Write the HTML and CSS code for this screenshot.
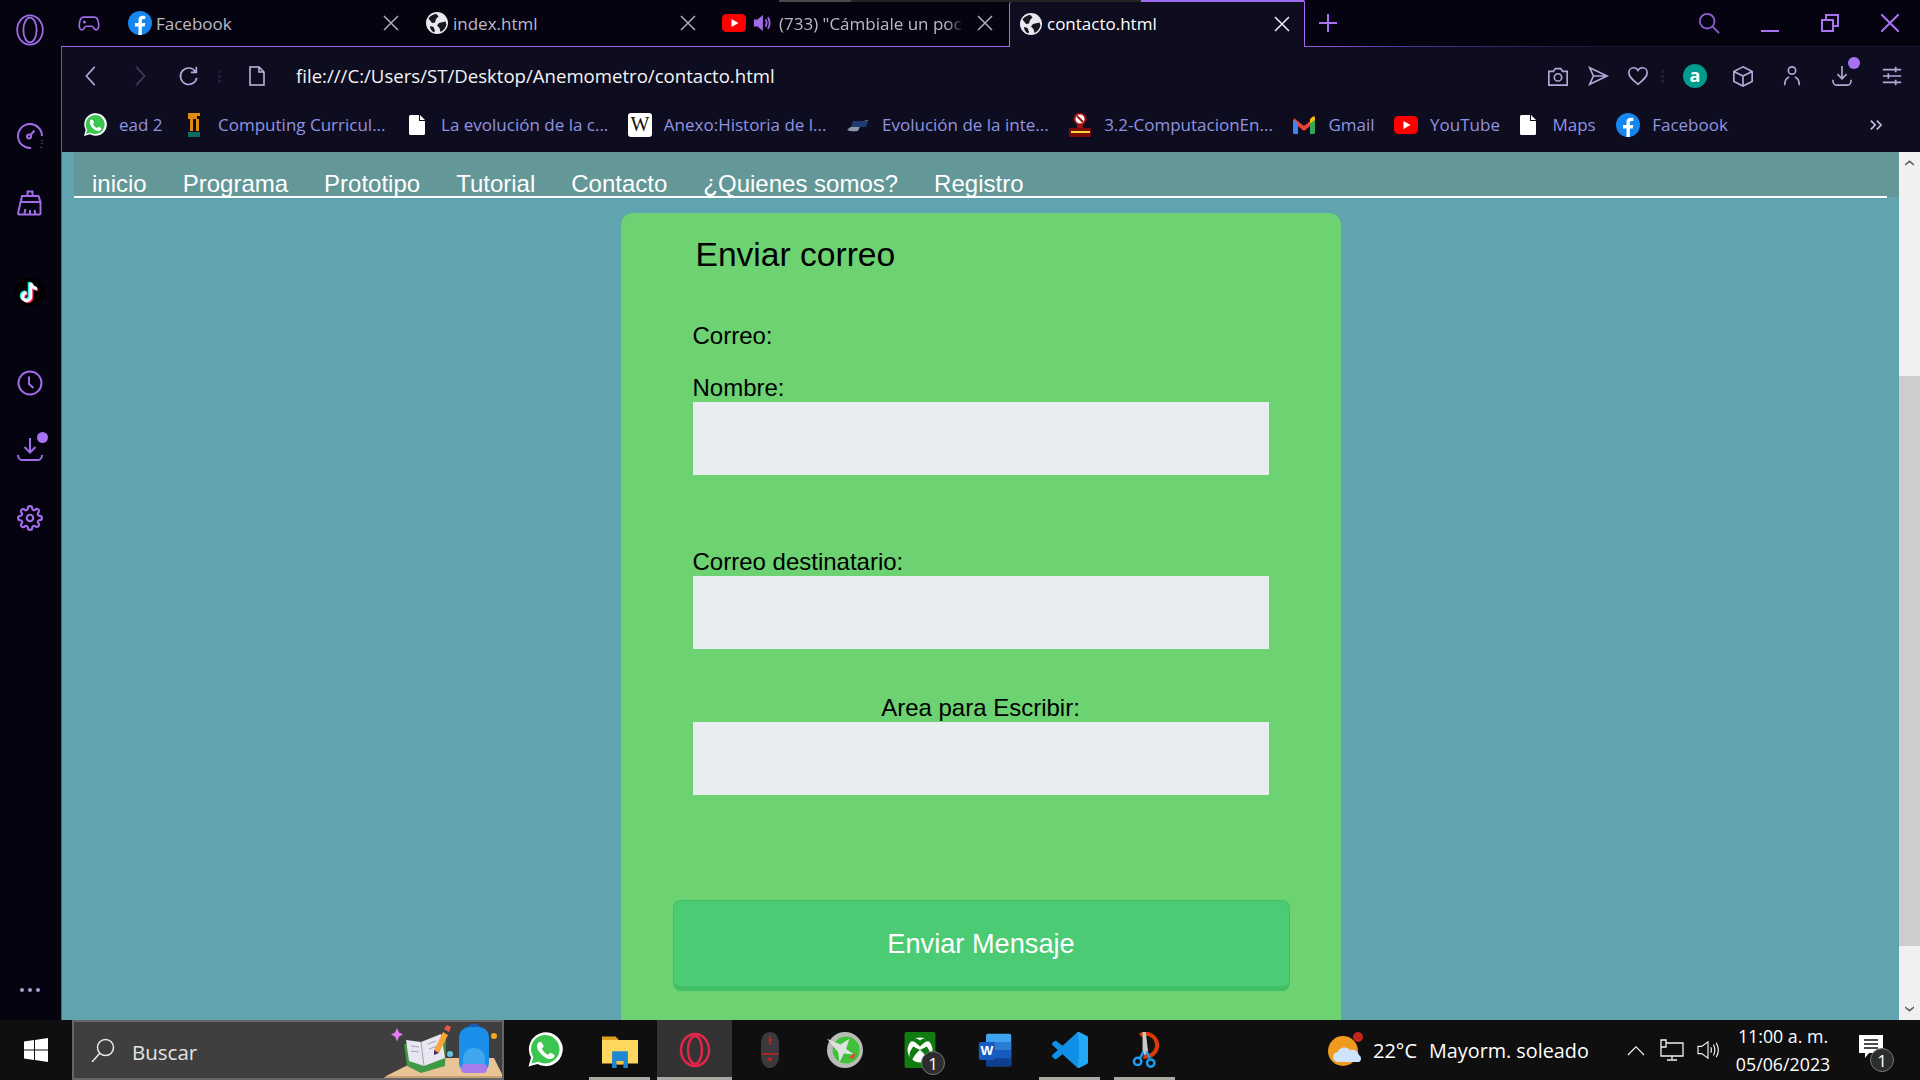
FILE: index.html
```html
<!DOCTYPE html>
<html lang="es">
  <head>
    <meta charset="UTF-8" />
    <meta name="viewport" content="width=device-width, initial-scale=1.0" />
    <title>contacto.html</title>
    <link rel="stylesheet" href="styles.css">
  </head>
  <body>
    <!-- iconos repetidos -->
    <svg class="defs" width="0" height="0">
      <symbol id="i-fb" viewBox="0 0 24 24">
        <circle cx="12" cy="12" r="12" fill="#1686f0" />
        <path fill="#fff" d="M16.7 15.5l.5-3.5h-3.4V9.8c0-1 .5-1.9 2-1.9h1.5V5c-2.2-.4-6.8-1-6.8 4.3V12H7v3.5h3.5V24h3.3v-8.5z" />
      </symbol>
      <symbol id="i-globe" viewBox="0 0 24 24">
        <circle cx="12" cy="12" r="11" fill="#e8e8ee" />
        <path fill="#17151f" d="M3.5 7.5c2-3 5-4.5 8-4.5l2 2.5-2.500 2.500-1 3.500-3 .5zM14 12l6.500-1.500 1 3c-1 3.500-3 6-6 7.500l-1-4-2.500-2.500zM5 15l3.500 1 1.500 4-1 1.500C6.500 20 5 18 5 15z" />
      </symbol>
      <symbol id="i-doc" viewBox="0 0 16 20">
        <path fill="#fff" d="M0 1.500A1.500 1.500 0 0 1 1.500 0H10l6 6v12.500a1.500 1.500 0 0 1-1.500 1.500h-13A1.500 1.500 0 0 1 0 18.500z" />
        <path fill="#0e0c1f" d="M10 0l1 0 5 5 0 1-6 0z" />
        <path fill="#fff" d="M11 0l5 5h-5z" />
      </symbol>
      <symbol id="i-yt" viewBox="0 0 24 18">
        <rect width="24" height="18" rx="4.500" fill="#f00" />
        <path fill="#fff" d="M9.500 5l7 4-7 4z" />
      </symbol>
      <symbol id="i-wa" viewBox="0 0 24 24">
        <path fill="#fff" d="M1 23l1.700-6A11.300 11.300 0 1 1 7 21.300z" />
        <path fill="#3dc552" d="M3 21l1.200-4.300A9.500 9.500 0 1 1 7.500 19.800z" />
        <path fill="#fff" d="M8.700 6.500c-.6 0-2 1-2 3 0 3.500 5 8.500 8.700 8.500 2 0 3-1.500 3-2.400 0-.5-2.400-1.800-2.900-1.800-.4 0-1 1.300-1.500 1.300-1 0-4-3-4-4 0-.5 1.100-1 1.100-1.500 0-.5-1.300-3.100-2.400-3.100z" />
      </symbol>
    </svg>

    <div class="screen">
      <div class="browser">
        <aside class="sidebar">
          <svg class="side-logo" viewBox="0 0 34 38" fill="none" stroke="#a06ce8" stroke-width="2">
            <ellipse cx="17" cy="19" rx="14.500" ry="16.500" />
            <ellipse cx="17" cy="19" rx="7.500" ry="14" />
          </svg>
          <svg class="side-icon side-speed" viewBox="0 0 26 26">
            <path d="M14 25A12 12 0 1 1 25 13" />
            <circle cx="12" cy="13.500" r="2" />
            <path d="M13.500 12l4-4.500M25 17v.5M25 20.500v.5M24 24v.5" />
          </svg>
          <svg class="side-icon side-broom" viewBox="0 0 26 26">
            <path d="M10.500 6V1.500h5V6M5 6h16.500l2 6v11.500a1 1 0 0 1-1 1H2a1 1 0 0 1-1-1zM4 12h19M7 25l1.500-6M13 25v-5M18.500 25l-1-5" />
          </svg>
          <div class="side-tiktok">
            <svg viewBox="0 0 24 24" fill="none" stroke-width="2.600">
              <path stroke="#25f4ee" d="M11.500 4v11a3.200 3.200 0 1 1-3.200-3.200M11.500 4c.5 2.500 2.500 4.500 5 4.600" />
              <path stroke="#fe2c55" d="M13.500 5.500v11a3.200 3.200 0 1 1-3.200-3.200M13.500 5.500c.5 2.500 2.500 4.500 5 4.600" />
              <path stroke="#fff" d="M12.500 4.700v11a3.200 3.200 0 1 1-3.200-3.200M12.500 4.700c.5 2.500 2.500 4.500 5 4.600" />
            </svg>
          </div>
          <svg class="side-icon side-clock" viewBox="0 0 26 26">
            <circle cx="13" cy="13" r="11.500" />
            <path d="M12 6.500v7.500l4.500 4" />
          </svg>
          <div class="side-download">
            <svg class="side-icon" viewBox="0 0 26 26">
              <path d="M13 1v14M7.500 10l5.500 5.500 5.500-5.500M1 18c0 3 2 5 4 5h16c2 0 4-2 4-5" />
            </svg>
            <span class="dot"></span>
          </div>
          <svg class="side-icon side-gear" viewBox="0 0 24 24">
            <circle cx="12" cy="12" r="3" />
            <path d="M19.400 15a1.650 1.650 0 0 0 .33 1.820l.06.06a2 2 0 0 1 0 2.830 2 2 0 0 1-2.830 0l-.06-.06a1.650 1.650 0 0 0-1.820-.33 1.650 1.650 0 0 0-1 1.510V21a2 2 0 0 1-2 2 2 2 0 0 1-2-2v-.09A1.650 1.650 0 0 0 9 19.400a1.650 1.650 0 0 0-1.820.33l-.06.06a2 2 0 0 1-2.830 0 2 2 0 0 1 0-2.830l.06-.06a1.650 1.650 0 0 0 .33-1.820 1.650 1.650 0 0 0-1.510-1H3a2 2 0 0 1-2-2 2 2 0 0 1 2-2h.09A1.650 1.650 0 0 0 4.600 9a1.650 1.650 0 0 0-.33-1.820l-.06-.06a2 2 0 0 1 0-2.830 2 2 0 0 1 2.830 0l.06.06a1.650 1.650 0 0 0 1.820.33H9a1.650 1.650 0 0 0 1-1.510V3a2 2 0 0 1 2-2 2 2 0 0 1 2 2v.09a1.650 1.650 0 0 0 1 1.510 1.650 1.650 0 0 0 1.820-.33l.06-.06a2 2 0 0 1 2.830 0 2 2 0 0 1 0 2.830l-.06.06a1.650 1.650 0 0 0-.33 1.820V9a1.650 1.650 0 0 0 1.510 1H21a2 2 0 0 1 2 2 2 2 0 0 1-2 2h-.09a1.650 1.650 0 0 0-1.510 1z" />
          </svg>
          <div class="side-more"><span></span><span></span><span></span></div>
        </aside>

        <div class="window">
          <div class="tabbar">
            <div class="tab-games">
              <svg viewBox="0 0 24 18" fill="none" stroke="#a06ce8" stroke-width="1.800">
                <path d="M6 2h12c2.500 0 4 3 4.500 7 .5 4-.5 7-2.500 7-2.500 0-3-4-5-4H9c-2 0-2.500 4-5 4-2 0-3-3-2.500-7C2 5 3.500 2 6 2z" />
                <path d="M7 6v3M5.500 7.500h3M16 7h.1M18 8.500h.1" />
              </svg>
            </div>
            <div class="tab">
              <svg class="tab-icon"><use href="#i-fb" /></svg>
              <span class="tab-title">Facebook</span>
              <svg class="tab-close" viewBox="0 0 16 16"><path d="M1 1l14 14M15 1L1 15" /></svg>
            </div>
            <div class="tab">
              <svg class="tab-icon"><use href="#i-globe" /></svg>
              <span class="tab-title">index.html</span>
              <svg class="tab-close" viewBox="0 0 16 16"><path d="M1 1l14 14M15 1L1 15" /></svg>
            </div>
            <div class="tab">
              <svg class="tab-icon tab-yt"><use href="#i-yt" /></svg>
              <svg class="tab-sound" viewBox="0 0 20 20">
                <path fill="#a06ce8" d="M1 6h4l6-5v18l-6-5H1z" />
                <path fill="none" stroke="#a06ce8" stroke-width="2" d="M14 6c1.500 2.500 1.500 5.500 0 8M16.500 3.500c2.500 4 2.500 9 0 13" />
              </svg>
              <span class="tab-title tab-fade">(733) "Cámbiale un poc</span>
              <svg class="tab-close" viewBox="0 0 16 16"><path d="M1 1l14 14M15 1L1 15" /></svg>
            </div>
            <div class="tab tab-active">
              <svg class="tab-icon"><use href="#i-globe" /></svg>
              <span class="tab-title">contacto.html</span>
              <svg class="tab-close" viewBox="0 0 16 16"><path d="M1 1l14 14M15 1L1 15" /></svg>
            </div>
            <svg class="tab-new" viewBox="0 0 18 18"><path d="M9 0v18M0 9h18" /></svg>
            <div class="tab-load"><span class="load-a"></span><span class="load-b"></span><span class="load-c"></span></div>
            <div class="win-controls">
              <svg class="win-search" viewBox="0 0 24 24"><circle cx="10" cy="10" r="8" /><path d="M16 16l7 7" /></svg>
              <svg class="win-btn" viewBox="0 0 18 18"><path d="M0 17h18" /></svg>
              <svg class="win-btn" viewBox="0 0 18 18"><path d="M1 6h11v11H1zM5 6V1h12v11h-5" /></svg>
              <svg class="win-btn" viewBox="0 0 18 18"><path d="M0 0l18 18M18 0L0 18" /></svg>
            </div>
          </div>

          <div class="body">
            <div class="toolbar">
              <div class="tool-left">
                <svg class="tool" viewBox="0 0 24 24"><path d="M16 2L7 12l9 10" /></svg>
                <svg class="tool tool-off" viewBox="0 0 24 24"><path d="M8 2l9 10-9 10" /></svg>
                <svg class="tool" viewBox="0 0 24 24"><path d="M19 7a9 9 0 1 0 1.500 7M20 2v6h-6" /></svg>
              </div>
              <div class="tool-sep"><span></span><span></span><span></span></div>
              <svg class="tool-doc" viewBox="0 0 16 20"><path d="M1 1h9l5 5v13H1zM10 1v5h5" /></svg>
              <span class="url">file:///C:/Users/ST/Desktop/Anemometro/contacto.html</span>
              <div class="tool-right">
                <svg class="tool" viewBox="0 0 24 24"><path d="M2 7h5l2-3h6l2 3h5v15H2z" /><circle cx="12" cy="13.500" r="4" /></svg>
                <svg class="tool" viewBox="0 0 24 24"><path d="M3 3l19 9-19 9 4-9zM7 12h15" /></svg>
                <svg class="tool" viewBox="0 0 24 24"><path d="M12 21C6 16 2 13 2 8.500 2 5 4.500 3 7 3c2 0 4 1 5 3 1-2 3-3 5-3 2.500 0 5 2 5 5.500C22 13 18 16 12 21z" /></svg>
                <div class="tool-sep tool-sep-right"><span></span><span></span><span></span></div>
                <div class="aria-slot">
                  <svg viewBox="0 0 24 24"><circle cx="12" cy="12" r="12" fill="#009d8e" /><text x="12" y="17.500" text-anchor="middle" class="aria-letter">a</text></svg>
                </div>
                <svg class="tool tool-cube" viewBox="0 0 24 24"><path d="M12 2l10 5v11l-10 5-10-5V7zM2 7l10 5 10-5M12 12v11" /></svg>
                <svg class="tool tool-person" viewBox="0 0 24 24"><circle cx="12" cy="6" r="4" /><path d="M4 22c0-5 2-8 5-9M20 22c0-5-2-8-5-9" /></svg>
                <div class="tool-download">
                  <svg class="tool" viewBox="0 0 24 24"><path d="M12 1v14M7 10l5 5 5-5M2 16c0 3 1.500 6 4 6h12c2.500 0 4-3 4-6" /></svg>
                  <span class="dot"></span>
                </div>
                <svg class="tool" viewBox="0 0 24 24"><path d="M2 5h20M2 12h20M2 19h20M16 2v6M8 9v6M16 16v6" /></svg>
              </div>
            </div>

            <div class="bookmarks">
              <div class="bm"><svg class="bm-icon"><use href="#i-wa" /></svg><span>ead 2</span></div>
              <div class="bm bm-curr">
                <svg class="bm-icon" viewBox="0 0 24 24">
                  <path fill="#e18a12" d="M6 0h12v3h-3v3H6zM8 6h3v12H8zM14 6h3v12h-3z" />
                  <path fill="#0d6a5f" d="M6 19h12v5H6z" />
                </svg>
                <span>Computing Curricul...</span>
              </div>
              <div class="bm bm-doc bm-first-doc"><svg class="bm-doc-icon"><use href="#i-doc" /></svg><span>La evolución de la c...</span></div>
              <div class="bm">
                <svg class="bm-icon" viewBox="0 0 24 24"><rect width="24" height="24" rx="3" fill="#fff" /><text x="12" y="18" text-anchor="middle" class="wiki-letter">W</text></svg>
                <span>Anexo:Historia de l...</span>
              </div>
              <div class="bm">
                <svg class="bm-icon" viewBox="0 0 24 24">
                  <path fill="#8b99ab" d="M1 17c5-5 13-9 22-10-7 3-9 6-11 11-3 0-7 1-11-1z" />
                  <path fill="#1f3c70" d="M7 8h15l-2 6H5z" />
                </svg>
                <span>Evolución de la inte...</span>
              </div>
              <div class="bm">
                <svg class="bm-icon" viewBox="0 0 24 24">
                  <circle cx="12" cy="6" r="5.500" fill="#fff" stroke="#a01111" stroke-width="2" />
                  <path stroke="#a01111" stroke-width="2" d="M9 3l6 6" />
                  <rect x="9" y="11" width="6" height="4" fill="#a01111" />
                  <rect x="1" y="15" width="22" height="9" rx="1" fill="#7c0b0b" />
                  <rect x="3" y="18" width="19" height="2" fill="#ffd83a" />
                </svg>
                <span>3.2-ComputacionEn...</span>
              </div>
              <div class="bm">
                <svg class="bm-icon" viewBox="0 0 24 24">
                  <path fill="#ea4335" d="M2 5l10 8 10-8v5l-10 8-10-8z" />
                  <path fill="#4285f4" d="M1 6.500l5 3.500v11H2.500A1.500 1.500 0 0 1 1 19.500z" />
                  <path fill="#34a853" d="M23 6.500l-5 3.500v11h3.500a1.500 1.500 0 0 0 1.500-1.500z" />
                  <path fill="#fbbc04" d="M18 6l3-2.500c1-.5 2 .2 2 1.500v2l-5 3.500z" />
                </svg>
                <span>Gmail</span>
              </div>
              <div class="bm"><svg class="bm-icon bm-yt"><use href="#i-yt" /></svg><span>YouTube</span></div>
              <div class="bm bm-doc bm-maps"><svg class="bm-doc-icon"><use href="#i-doc" /></svg><span>Maps</span></div>
              <div class="bm"><svg class="bm-icon"><use href="#i-fb" /></svg><span>Facebook</span></div>
              <svg class="bm-more" viewBox="0 0 14 12"><path d="M1 1l5 5-5 5M8 1l5 5-5 5" /></svg>
            </div>

            <div class="viewport">
              <main class="page">
                <header class="site-header">
                  <ul class="site-menu">
                    <li><a href="#">inicio</a></li>
                    <li><a href="#">Programa</a></li>
                    <li><a href="#">Prototipo</a></li>
                    <li><a href="#">Tutorial</a></li>
                    <li><a href="#">Contacto</a></li>
                    <li><a href="#">¿Quienes somos?</a></li>
                    <li><a href="#">Registro</a></li>
                  </ul>
                </header>
                <form class="mail-card">
                  <h2>Enviar correo</h2>
                  <p class="mail-from">Correo:</p>
                  <label class="field">Nombre:<input type="text" /></label>
                  <label class="field field-dest">Correo destinatario:<input type="text" /></label>
                  <label class="field field-area">Area para Escribir:<input type="text" /></label>
                  <button type="button" class="send-button">Enviar Mensaje</button>
                </form>
              </main>
              <div class="scrollbar">
                <svg class="scroll-arrow" viewBox="0 0 10 6"><path d="M0 6V4l5-4 5 4v2L5 2.500z" /></svg>
                <div class="scroll-track"><div class="scroll-thumb"></div></div>
                <svg class="scroll-arrow" viewBox="0 0 10 6"><path d="M0 0v2l5 4 5-4V0L5 3.500z" /></svg>
              </div>
            </div>
          </div>
        </div>
      </div>

      <footer class="taskbar">
        <div class="start">
          <svg viewBox="0 0 24 24"><path fill="#fff" d="M0 3.500l10-1.400V11.400H0zM11 2L24 0v11.400H11zM0 12.600h10v9.300L0 20.500zM11 12.600h13V24l-13-2z" /></svg>
        </div>
        <div class="search-box">
          <svg class="search-glass" viewBox="0 0 24 24"><circle cx="14.500" cy="9.500" r="8" /><path d="M9 15L1 24" /></svg>
          <span>Buscar</span>
          <svg class="search-art" viewBox="0 0 118 56">
            <path fill="#c8a075" d="M0 56l2-2h116v2z" />
            <path fill="#e8c496" d="M2 54l36-18h72l8 16v2z" />
            <path fill="#e57bf0" d="M13 6l2 4.500 4 2-4 2-2 5-2-5-4-2 4-2z" />
            <path fill="#3f9a45" d="M20 22l24 2 18-6-1 26-24 7-14-7z" />
            <path fill="#e8e6f0" d="M22 18l15 2 20-8 4 24-21 8-15-5z" />
            <path fill="none" stroke="#a99fb8" stroke-width="1" d="M37 20l3 24M27 24l8 1M27 29l8 1M44 22l8-3M45 27l8-3" />
            <path fill="#f7a63b" d="M50 28l9-18 5 3-9 18z" />
            <path fill="#e65a4a" d="M60 7l3-4 4 2-2 5z" />
            <path fill="#4a2c60" d="M50 28l5 3-5 2z" />
            <circle cx="66" cy="32" r="3" fill="#69c4df" />
            <circle cx="110" cy="14" r="3" fill="#f5a623" />
            <path fill="none" stroke="#1a5ec2" stroke-width="3" d="M84 9c0-8 12-8 12 0" />
            <rect x="75" y="5" width="30" height="46" rx="10" fill="#1a8ee8" />
            <rect x="79" y="26" width="22" height="24" rx="10" fill="#3fa6f0" />
            <rect x="77" y="42" width="26" height="9" rx="4" fill="#a67cea" />
          </svg>
        </div>
        <div class="task-apps">
          <div class="task-app"><svg class="app-icon app-wa"><use href="#i-wa" /></svg></div>
          <div class="task-app task-open">
            <svg class="app-icon" viewBox="0 0 32 32">
              <path fill="#e0a21e" d="M0 4h12l3 3H0z" />
              <path fill="#ffd65e" d="M0 7h32v21H0z" />
              <path fill="#1f87d0" d="M9 17h14v15h-4v-6h-6v6H9z" />
              <path fill="#ffc83d" d="M13 26h6v3h-6z" />
            </svg>
          </div>
          <div class="task-app task-active">
            <svg class="app-icon" viewBox="0 0 32 36" fill="none" stroke="#e0264a" stroke-width="2.500">
              <ellipse cx="16" cy="18" rx="14" ry="16" />
              <ellipse cx="16" cy="18" rx="7" ry="14" />
            </svg>
          </div>
          <div class="task-app">
            <svg class="app-mouse" viewBox="0 0 20 36">
              <path fill="#3a3a3e" d="M10 0c6 0 9 5 9 12v12c0 7-4 12-9 12S1 31 1 24V12C1 5 4 0 10 0z" />
              <path stroke="#c92020" stroke-width="1.500" d="M2 22h16M8 8h4M10 4v9" />
              <path fill="#c92020" d="M7 26h6l-3 4z" />
            </svg>
          </div>
          <div class="task-app">
            <svg class="app-icon" viewBox="0 0 32 32">
              <circle cx="16" cy="16" r="16" fill="#b7bcb5" />
              <circle cx="17" cy="16" r="12" fill="#3fc23a" />
              <path fill="#dfe3df" d="M0 6l12 5 8-5-3 9 7 5-9-1-4 8-1-9z" />
              <path fill="#e7492e" d="M19 23l6-5-1 6z" />
            </svg>
          </div>
          <div class="task-app">
            <svg class="app-icon app-xbox" viewBox="0 0 36 42">
              <rect width="36" height="42" rx="2" fill="#107c10" />
              <circle cx="18" cy="21" r="14.500" fill="#fff" />
              <path fill="#107c10" d="M18 17c-5-5-8-7-11-6l-1-1C9 6 14 7 18 10c4-3 9-4 12 0l-1 1c-3-1-6 1-11 6zM18 21c-5 4-9 10-9 12l-2-1c-3-6 0-10 3-15zM18 21c5 4 9 10 9 12l2-1c3-6 0-10-3-15z" />
            </svg>
            <span class="task-badge">1</span>
          </div>
          <div class="task-app">
            <svg class="app-icon" viewBox="0 0 36 40">
              <rect x="8" y="2" width="28" height="36" rx="2" fill="#41a5ee" />
              <rect x="8" y="11" width="28" height="9" fill="#2b7cd3" />
              <rect x="8" y="20" width="28" height="9" fill="#185abd" />
              <rect x="8" y="29" width="28" height="9" fill="#103f91" />
              <rect x="0" y="11" width="18" height="20" rx="2" fill="#185abd" />
              <text x="9" y="26" text-anchor="middle" class="word-letter">W</text>
            </svg>
          </div>
          <div class="task-app task-open">
            <svg class="app-icon" viewBox="0 0 100 100">
              <path fill="#0f8fe6" d="M70.900 99.300a6.200 6.200 0 0 0 5-.2l20.600-9.900A6.200 6.200 0 0 0 100 83.600V16.400a6.200 6.200 0 0 0-3.500-5.600L75.900.9a6.200 6.200 0 0 0-7.100 1.200L29.400 38.100 12.200 25a4.200 4.200 0 0 0-5.300.2L1.400 30.300a4.200 4.200 0 0 0 0 6.200L16.300 50 1.400 63.500a4.200 4.200 0 0 0 0 6.200l5.500 5a4.200 4.200 0 0 0 5.300.2l17.200-13.100 39.400 36a6.200 6.200 0 0 0 2.100 1.500zM75 27.300L45.100 50 75 72.700z" />
              <path fill="#23a9f6" d="M70.900 99.300a6.200 6.200 0 0 0 5-.2l20.600-9.900A6.200 6.200 0 0 0 100 83.600V16.400a6.200 6.200 0 0 0-3.500-5.600L75.900.9a6.200 6.200 0 0 0-5-.2L75 27.300v45.400z" />
            </svg>
          </div>
          <div class="task-app task-open">
            <svg class="app-icon" viewBox="0 0 32 44">
              <path fill="none" stroke="#d83b01" stroke-width="5" d="M10 4a14 14 0 1 1 4 26" />
              <path fill="#c8c8c8" d="M13 0h4l3 26-4 2-3-2z" />
              <path stroke="#1f9cf0" stroke-width="3" d="M14 24l-4 8M18 24l4 8" />
              <circle cx="7" cy="36" r="4.500" fill="none" stroke="#1f9cf0" stroke-width="3" />
              <circle cx="23" cy="38" r="4.500" fill="none" stroke="#1f9cf0" stroke-width="3" />
            </svg>
          </div>
        </div>
        <div class="tray">
          <svg class="weather" viewBox="0 0 36 36">
            <circle cx="15" cy="19" r="15" fill="#f09a1f" />
            <circle cx="30" cy="5" r="5" fill="#c4261d" />
            <path fill="#cfe4fa" d="M10 30a5 5 0 0 1 0-10c1-5 9-6 12-2 4-1 8 1 9 5a4 4 0 0 1 0 7z" />
          </svg>
          <span class="weather-temp">22°C</span>
          <span class="weather-text">Mayorm. soleado</span>
          <svg class="tray-icon tray-up" viewBox="0 0 20 12"><path d="M1 11l9-9 9 9" /></svg>
          <svg class="tray-icon tray-net" viewBox="0 0 24 22"><path d="M6 4h17v13H1V1h5v7H1M12 17v3M7 21h10" /></svg>
          <svg class="tray-icon tray-vol" viewBox="0 0 24 22"><path d="M1 7h4l7-5v18l-7-5H1zM15 8c1 2 1 4 0 6M18 5c2 4 2 8 0 12M21 3c3 5 3 11 0 16" /></svg>
          <div class="clock">
            <span>11:00 a. m.</span>
            <span>05/06/2023</span>
          </div>
          <div class="notify">
            <svg viewBox="0 0 24 24"><path fill="#fff" d="M0 0h24v18H10l-4 5v-5H0z" /><path stroke="#111" stroke-width="1.500" d="M5 5h14M5 9h14M5 13h14" /></svg>
            <span class="task-badge">1</span>
          </div>
        </div>
      </footer>
    </div>
  </body>
</html>
```

FILE: styles.css
```css
* {
  box-sizing: border-box;
}

html,
body {
  margin: 0;
  height: 100%;
  overflow: hidden;
}

body {
  font-family: "Open Sans", "Noto Sans", sans-serif;
  background-color: #05030f;
}

.defs {
  display: block;
  height: 0;
}

.screen {
  display: flex;
  flex-direction: column;
  width: 1920px;
  height: 1080px;
}

.browser {
  display: flex;
  height: 1020px;
}

/* barra lateral */
.sidebar {
  position: relative;
  display: flex;
  flex-direction: column;
  align-items: center;
  width: 61px;
  flex-shrink: 0;
  padding-right: 2px;
  background-color: #05030f;
}

.side-logo {
  width: 30px;
  height: 34px;
  margin-top: 13px;
}

.side-icon {
  width: 26px;
  height: 26px;
  fill: none;
  stroke: #a06ce8;
  stroke-width: 2;
}

.side-speed {
  margin-top: 76px;
}

.side-broom {
  margin-top: 41px;
}

.side-tiktok {
  width: 30px;
  height: 30px;
  margin-top: 61px;
  border-radius: 50%;
  background-color: #000;
}

.side-tiktok svg {
  display: block;
  width: 30px;
  height: 30px;
}

.side-clock {
  margin-top: 63px;
}

.side-download {
  position: relative;
  height: 26px;
  margin-top: 41px;
}

.side-download .dot {
  top: -5px;
  right: -5px;
}

.side-gear {
  margin-top: 42px;
}

.side-more {
  position: absolute;
  bottom: 28px;
  display: flex;
  gap: 4px;
}

.side-more span {
  width: 4px;
  height: 4px;
  border-radius: 50%;
  background-color: #a89fd0;
}

.dot {
  position: absolute;
  width: 11px;
  height: 11px;
  border-radius: 50%;
  background-color: #a873f2;
}

/* ventana */
.window {
  display: flex;
  flex-direction: column;
  flex: 1;
  min-width: 0;
}

.tabbar {
  position: relative;
  display: flex;
  align-items: stretch;
  height: 47px;
  flex-shrink: 0;
  background-color: #05030f;
  border-bottom: 1px solid;
  border-image: linear-gradient(to right, #a06cf0 0%, #a06cf0 66%, #51349a 72%, #1a1230 83%) 1;
}

.tab-games {
  display: flex;
  align-items: center;
  justify-content: center;
  width: 56px;
}

.tab-games svg {
  width: 22px;
  height: 17px;
}

.tab {
  display: flex;
  align-items: center;
  width: 297px;
  padding-left: 11px;
  padding-right: 15px;
  color: #bdbac8;
  font-size: 17px;
}

.tab-icon {
  width: 24px;
  height: 24px;
  margin-right: 4px;
  flex-shrink: 0;
}

.tab-yt {
  height: 18px;
  margin-right: 7px;
}

.tab-sound {
  width: 18px;
  height: 18px;
  margin-right: 8px;
  flex-shrink: 0;
}

.tab-title {
  flex: 1;
  white-space: nowrap;
}

.tab-fade {
  margin-right: 12px;
  -webkit-mask-image: linear-gradient(to right, #000 90%, transparent 100%);
  mask-image: linear-gradient(to right, #000 90%, transparent 100%);
}

.tab-close {
  width: 16px;
  height: 16px;
  flex-shrink: 0;
  fill: none;
  stroke: #b0adbb;
  stroke-width: 1.500;
}

.tab-active {
  width: 296px;
  height: 47px;
  margin-left: 1px;
  margin-bottom: -1px;
  padding-left: 9px;
  padding-right: 14px;
  color: #fff;
  background-color: #0e0c1f;
  border-left: 1px solid #a06cf0;
  border-right: 1px solid #a06cf0;
  border-radius: 5px 2px 0 0;
}

.tab-active .tab-close {
  stroke: #f2f2f2;
}

.tab-new {
  width: 18px;
  height: 18px;
  margin: 14px 0 0 14px;
  fill: none;
  stroke: #a873f2;
  stroke-width: 2;
}

.tab-load {
  position: absolute;
  top: 0;
  left: 718px;
  display: flex;
  width: 525px;
  height: 2px;
}

.load-a {
  width: 72px;
  background-color: #4a4a4a;
}

.load-b {
  width: 290px;
  background-color: #232323;
}

.load-c {
  width: 163px;
  background-color: #a06cf0;
}

.win-controls {
  display: flex;
  align-items: flex-start;
  margin-left: auto;
  padding: 14px 21px 0 0;
}

.win-search {
  width: 22px;
  height: 22px;
  margin-right: 41px;
  margin-top: -2px;
  fill: none;
  stroke: #8b5fd6;
  stroke-width: 2;
}

.win-btn {
  width: 18px;
  height: 18px;
  margin-left: 42px;
  fill: none;
  stroke: #a873f2;
  stroke-width: 2;
}

.win-search + .win-btn {
  margin-left: 0;
}

.body {
  display: flex;
  flex-direction: column;
  flex: 1;
  min-height: 0;
  background-color: #0e0c1f;
  border-left: 1px solid #6f4fb4;
}

.toolbar {
  display: flex;
  align-items: center;
  height: 58px;
  flex-shrink: 0;
  padding: 0 17px 0 8px;
}

.tool-left,
.tool-right {
  display: flex;
  align-items: center;
}

.tool-left {
  gap: 27px;
  padding-left: 10px;
}

.tool {
  display: block;
  width: 22px;
  height: 22px;
  fill: none;
  stroke: #b3a8d8;
  stroke-width: 1.800;
}

.tool-off {
  stroke: #3e3a5a;
}

.tool-sep {
  display: flex;
  flex-direction: column;
  gap: 2px;
  margin: 0 28px 0 18px;
}

.tool-sep span {
  width: 3px;
  height: 3px;
  background-color: #1f1b3a;
}

.tool-doc {
  width: 16px;
  height: 20px;
  fill: none;
  stroke: #c4bbe4;
  stroke-width: 1.500;
}

.url {
  flex: 1;
  margin-left: 31px;
  margin-top: -1px;
  color: #f4f4f6;
  font-size: 18.600px;
}

.tool-right {
  gap: 18px;
}

.tool-sep-right {
  margin: 0 1px 0 -6px;
}

.aria-slot svg {
  display: block;
  width: 24px;
  height: 24px;
}

.aria-letter {
  fill: #fff;
  font-family: "Open Sans", sans-serif;
  font-size: 18px;
  font-weight: 700;
}

.tool-cube {
  margin-left: 7px;
}

.tool-person {
  margin-left: 9px;
}

.tool-download {
  position: relative;
  margin-left: 10px;
  margin-right: 10px;
}

.tool-download .dot {
  top: -8px;
  right: -7px;
  width: 12px;
  height: 12px;
}

.bookmarks {
  display: flex;
  align-items: center;
  height: 47px;
  flex-shrink: 0;
  padding: 0 38px 8px 21px;
  gap: 19.500px;
  color: #9094e0;
  font-size: 17px;
}

.bm {
  display: flex;
  align-items: center;
  gap: 12px;
  white-space: nowrap;
}

.bm-icon {
  width: 24px;
  height: 24px;
  flex-shrink: 0;
}

.bm-yt {
  height: 18px;
}

.bm-doc-icon {
  width: 16px;
  height: 20px;
  flex-shrink: 0;
}

.bm-doc {
  gap: 16px;
}

.bm-first-doc {
  margin-left: 4px;
}

.bm-maps {
  margin-left: 1px;
  margin-right: 1px;
}

.wiki-letter {
  fill: #111;
  font-family: "Liberation Serif", serif;
  font-size: 20px;
}

.word-letter {
  fill: #fff;
  font-family: "Liberation Sans", sans-serif;
  font-size: 15px;
  font-weight: 700;
}

.bm-more {
  width: 12px;
  height: 12px;
  margin-left: auto;
  fill: none;
  stroke: #c4bbe4;
  stroke-width: 2;
}

/* pagina */
.viewport {
  display: flex;
  flex: 1;
  min-height: 0;
}

.page {
  flex: 1;
  min-width: 0;
  overflow: hidden;
  background-color: #5fa4af;
  font-family: "Liberation Sans", Arial, sans-serif;
  color: #000;
}

.site-header {
  height: 45px;
  margin-left: 12px;
  background-color: #649797;
}

.site-menu {
  display: flex;
  gap: 36px;
  height: 46px;
  margin: 0 12px 0 0;
  padding: 18px 0 0 18px;
  list-style: none;
  border-bottom: 2px solid #fff;
}

.site-menu a {
  color: #fff;
  font-size: 24px;
  line-height: 27px;
  text-decoration: none;
}

.mail-card {
  display: flex;
  flex-direction: column;
  width: 720px;
  height: 900px;
  margin: 16px auto 0;
  padding: 20px 72px 0;
  background-color: #6cd272;
  border-radius: 12px;
  font-size: 24px;
}

.mail-card h2 {
  margin: 0 0 0 3px;
  font-size: 33.600px;
  font-weight: 400;
  line-height: 44px;
}

.mail-from {
  margin: 45px 0 0;
  line-height: 27px;
}

.field {
  display: block;
  margin-top: 24px;
  line-height: 29px;
}

.field input {
  display: block;
  width: 100%;
  height: 73px;
  border: none;
  background-color: #e8edf0;
}

.field-dest {
  margin-top: 72px;
}

.field-area {
  margin-top: 44px;
  text-align: center;
}

.send-button {
  width: 617px;
  height: 91px;
  margin: 105px 0 0 -20px;
  color: #fff;
  font-family: "Liberation Sans", Arial, sans-serif;
  font-size: 27.200px;
  background-color: #4acb74;
  border: 1px solid #41bf66;
  border-bottom-width: 5px;
  border-radius: 8px;
}

.scrollbar {
  display: flex;
  flex-direction: column;
  align-items: center;
  width: 21px;
  flex-shrink: 0;
  background-color: #f0f0f0;
}

.scroll-arrow {
  width: 9px;
  height: 6px;
  margin: 8px 0;
  flex-shrink: 0;
  fill: #606060;
}

.scroll-track {
  flex: 1;
  width: 100%;
  padding-top: 202px;
  padding-bottom: 52px;
}

.scroll-thumb {
  height: 100%;
  background-color: #cdcdcd;
}

/* barra de tareas */
.taskbar {
  display: flex;
  align-items: stretch;
  height: 60px;
  flex-shrink: 0;
  background-color: #0f0f0f;
  font-family: "Open Sans", "Noto Sans", sans-serif;
  color: #fff;
}

.start {
  display: flex;
  align-items: center;
  justify-content: center;
  width: 72px;
}

.start svg {
  width: 24px;
  height: 24px;
}

.search-box {
  position: relative;
  display: flex;
  align-items: center;
  width: 432px;
  padding-left: 17px;
  padding-top: 3px;
  background-color: #3f3f3f;
  border: 2px solid #666;
  color: #e4e4e4;
  font-size: 20.500px;
}

.search-glass {
  width: 24px;
  height: 24px;
  margin-right: 17px;
  margin-top: -3px;
  fill: none;
  stroke: #e8e8e8;
  stroke-width: 1.500;
}

.search-art {
  position: absolute;
  right: 0;
  bottom: 0;
  width: 118px;
  height: 56px;
}

.task-apps {
  display: flex;
  padding-left: 3px;
}

.task-app {
  position: relative;
  display: flex;
  align-items: center;
  justify-content: center;
  width: 75px;
}

.app-icon {
  width: 36px;
  height: 36px;
}

.app-wa {
  width: 36px;
}

.app-mouse {
  width: 20px;
  height: 36px;
}

.task-open::after,
.task-active::after {
  content: "";
  position: absolute;
  bottom: 0;
  left: 7px;
  right: 7px;
  height: 3px;
  background-color: #a9a9a4;
}

.task-active {
  background-color: #333;
}

.task-active::after {
  left: 0;
  right: 0;
}

.task-badge {
  position: absolute;
  display: flex;
  align-items: center;
  justify-content: center;
  width: 24px;
  height: 24px;
  color: #fff;
  font-size: 17px;
  background-color: #2d2d2d;
  border: 1px solid #777;
  border-radius: 50%;
}

.task-app .task-badge {
  right: 12px;
  bottom: 5px;
}

.tray {
  display: flex;
  align-items: center;
  flex: 1;
  padding-left: 146px;
  font-size: 20px;
}

.weather {
  width: 36px;
  height: 36px;
  margin-left: 0;
}

.weather-temp {
  margin-left: 9px;
}

.weather-text {
  margin-left: 12px;
  width: 198px;
  font-size: 19.800px;
  white-space: nowrap;
}

.tray-icon {
  fill: none;
  stroke: #f2f2f2;
  stroke-width: 1.300;
}

.tray-up {
  width: 18px;
  height: 11px;
}

.tray-net {
  width: 24px;
  height: 22px;
  margin-left: 15px;
}

.tray-vol {
  width: 22px;
  height: 20px;
  margin-left: 13px;
}

.clock {
  display: flex;
  flex-direction: column;
  align-items: center;
  gap: 5px;
  width: 120px;
  margin-left: 4px;
  font-size: 17.800px;
  line-height: 23px;
}

.notify {
  position: relative;
  width: 24px;
  height: 30px;
  margin-left: 16px;
}

.notify svg {
  display: block;
  width: 24px;
  height: 24px;
}

.notify .task-badge {
  right: -11px;
  bottom: -7px;
}
```
